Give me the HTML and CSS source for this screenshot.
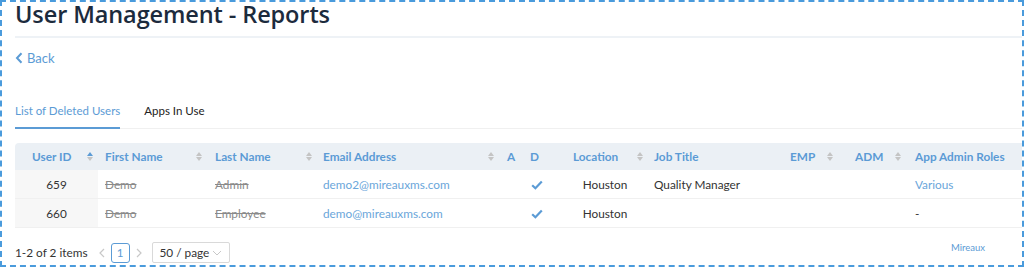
FILE: index.html
```html
<!DOCTYPE html>
<html>
<head>
<meta charset="utf-8">
<link rel="stylesheet" href="styles.css">
</head>
<body>
<div class="frame">
  <h1 class="title">User Management - Reports</h1>
  <div class="divider"></div>
  <a class="back"><svg width="8" height="12" viewBox="0 0 8 12"><path d="M6.5 1.2 L2 6 L6.5 10.8" fill="none" stroke="#5b9bd5" stroke-width="2"/></svg><span>Back</span></a>
  <div class="tabs">
    <div class="tab active">List of Deleted Users</div>
    <div class="tab">Apps In Use</div>
  </div>
  <div class="table-wrap">
    <table class="grid">
      <colgroup>
        <col style="width:83px"><col style="width:107px"><col style="width:110px"><col style="width:185px"><col style="width:20px"><col style="width:45px"><col style="width:80px"><col style="width:135px"><col style="width:60px"><col style="width:65px"><col style="width:117px">
      </colgroup>
      <thead>
        <tr>
          <th class="c-id"><div class="th"><span class="lbl">User ID</span><span class="sort asc"><i class="up"></i><i class="dn"></i></span></div></th>
          <th class="c-fn"><div class="th"><span class="lbl">First Name</span><span class="sort"><i class="up"></i><i class="dn"></i></span></div></th>
          <th class="c-ln"><div class="th"><span class="lbl">Last Name</span><span class="sort"><i class="up"></i><i class="dn"></i></span></div></th>
          <th class="c-em"><div class="th"><span class="lbl">Email Address</span><span class="sort"><i class="up"></i><i class="dn"></i></span></div></th>
          <th class="c-a"><div class="th"><span class="lbl">A</span></div></th>
          <th class="c-d"><div class="th"><span class="lbl">D</span></div></th>
          <th class="c-loc"><div class="th"><span class="lbl">Location</span><span class="sort"><i class="up"></i><i class="dn"></i></span></div></th>
          <th class="c-job"><div class="th"><span class="lbl">Job Title</span></div></th>
          <th class="c-emp"><div class="th"><span class="lbl">EMP</span><span class="sort"><i class="up"></i><i class="dn"></i></span></div></th>
          <th class="c-adm"><div class="th"><span class="lbl">ADM</span><span class="sort"><i class="up"></i><i class="dn"></i></span></div></th>
          <th class="c-roles"><div class="th"><span class="lbl">App Admin Roles</span></div></th>
        </tr>
      </thead>
      <tbody>
        <tr>
          <td class="c-id id">659</td>
          <td class="c-fn strike">Demo</td>
          <td class="c-ln strike">Admin</td>
          <td class="c-em link">demo2@mireauxms.com</td>
          <td class="c-a"></td>
          <td class="c-d"><svg class="check" width="12" height="10" viewBox="0 0 12 10"><path d="M1.2 5.2 L4.4 8.2 L10.8 1.6" fill="none" stroke="#5b9bd5" stroke-width="2.2"/></svg></td>
          <td class="c-loc loc">Houston</td>
          <td class="c-job">Quality Manager</td>
          <td class="c-emp"></td>
          <td class="c-adm"></td>
          <td class="c-roles link">Various</td>
        </tr>
        <tr>
          <td class="c-id id">660</td>
          <td class="c-fn strike">Demo</td>
          <td class="c-ln strike">Employee</td>
          <td class="c-em link">demo@mireauxms.com</td>
          <td class="c-a"></td>
          <td class="c-d"><svg class="check" width="12" height="10" viewBox="0 0 12 10"><path d="M1.2 5.2 L4.4 8.2 L10.8 1.6" fill="none" stroke="#5b9bd5" stroke-width="2.2"/></svg></td>
          <td class="c-loc loc">Houston</td>
          <td class="c-job"></td>
          <td class="c-emp"></td>
          <td class="c-adm"></td>
          <td class="c-roles dash">-</td>
        </tr>
      </tbody>
    </table>
  </div>
  <div class="footer">
    <div class="pager">
      <span class="total">1-2 of 2 items</span>
      <span class="nav prev"><svg width="6" height="10" viewBox="0 0 6 10"><path d="M5 1 L1 5 L5 9" fill="none" stroke="#c8c8c8" stroke-width="1.2"/></svg></span>
      <span class="page">1</span>
      <span class="nav next"><svg width="6" height="10" viewBox="0 0 6 10"><path d="M1 1 L5 5 L1 9" fill="none" stroke="#c8c8c8" stroke-width="1.2"/></svg></span>
      <span class="size"><span>50 / page</span><svg width="10" height="6" viewBox="0 0 10 6"><path d="M1 1 L5 5 L9 1" fill="none" stroke="#c8c8c8" stroke-width="1"/></svg></span>
    </div>
    <span class="brand">Mireaux</span>
  </div>
</div>
</body>
</html>
```
FILE: styles.css
```css
html, body {
  margin: 0;
  padding: 0;
  background: #ffffff;
}
body {
  font-family: Lato, "Open Sans", sans-serif;
  color: #333333;
}
.frame {
  box-sizing: border-box;
  width: 1024px;
  height: 267px;
  border: 2px dashed #4a9bdc;
  padding: 0 0 0 13px;
}
.title {
  margin: 0;
  font-family: "Open Sans", sans-serif;
  font-size: 23.5px;
  font-weight: 600;
  color: #1c2b3d;
  line-height: 24px;
  letter-spacing: -0.1px;
}
.divider {
  height: 2px;
  background: #eef2f6;
  margin-top: 10px;
}
.back {
  display: flex;
  align-items: center;
  gap: 4px;
  margin-top: 11px;
  height: 18px;
  color: #5b9bd5;
  font-size: 13px;
}
.tabs {
  display: flex;
  margin-top: 32px;
  border-bottom: 1px solid #f0f0f0;
}
.tab {
  font-size: 11.5px;
  line-height: 16px;
  padding: 4px 0 8px 0;
  margin-right: 24px;
  color: #222;
}
.tab.active {
  color: #5b9bd5;
  border-bottom: 2px solid #5b9bd5;
  margin-bottom: -1px;
}
.table-wrap {
  margin-top: 14px;
}
.grid {
  border-collapse: collapse;
  table-layout: fixed;
  width: 1007px;
  font-size: 11.8px;
}
.grid thead th {
  background: #ebf0f5;
  height: 27px;
  padding: 0;
  text-align: left;
  font-weight: 700;
  font-size: 11.8px;
  color: #5b9bd5;
}
.grid thead th:first-child {
  border-top-left-radius: 4px;
}
.th {
  display: flex;
  align-items: center;
  padding-left: 8px;
  padding-right: 4px;
}
.th .lbl {
  white-space: nowrap;
}
.sort {
  margin-left: auto;
  display: flex;
  flex-direction: column;
  gap: 1px;
}
.sort i {
  display: block;
  width: 0;
  height: 0;
  border-left: 3.5px solid transparent;
  border-right: 3.5px solid transparent;
}
.sort i.up { border-bottom: 4px solid #c4c4c4; }
.sort i.dn { border-top: 4px solid #c4c4c4; }
.sort.asc i.up { border-bottom-color: #5b9bd5; }
.c-id .th { padding-left: 17px; padding-right: 5px; }
.c-fn .th { padding-left: 7px; padding-right: 3px; }
.c-ln .th { padding-left: 10px; padding-right: 3px; }
.c-em .th { padding-left: 8px; padding-right: 6px; }
.c-a .th { padding-left: 7px; }
.c-d .th { padding-left: 10px; }
.c-loc .th { padding-left: 8px; padding-right: 2px; }
.c-job .th { padding-left: 9px; }
.c-emp .th { padding-left: 10px; padding-right: 7px; }
.c-adm .th { padding-left: 15px; padding-right: 4px; }
.c-roles .th { padding-left: 10px; }
.grid tbody td {
  height: 27px;
  padding: 1px 0 0 8px;
  border-bottom: 1px solid #f0f0f0;
  white-space: nowrap;
  color: #333;
}
.grid tbody td.id {
  background: #f7f7f7;
  text-align: center;
  padding: 1px 0 0 0;
}
.grid tbody td.c-fn { padding-left: 7px; }
.grid tbody td.c-ln { padding-left: 10px; }
.grid tbody td.c-job { padding-left: 9px; }
.grid tbody td.c-roles { padding-left: 10px; }
.strike {
  text-decoration: line-through;
  color: #8a8a8a !important;
}
.link {
  color: #6aa6da !important;
}
.grid tbody td.c-d {
  padding-left: 11px;
}
.check {
  display: block;
}
.grid tbody td.loc {
  text-align: center;
  padding: 1px 0 0 0;
}
.footer {
  display: flex;
  align-items: flex-start;
  justify-content: space-between;
  margin-top: 14px;
  padding-right: 37px;
}
.pager {
  display: flex;
  align-items: center;
  font-size: 11.8px;
  color: #333;
}
.total {
  margin-right: 11px;
  white-space: nowrap;
}
.nav {
  display: flex;
  align-items: center;
  width: 10px;
}
.nav.next { justify-content: flex-end; }
.page {
  box-sizing: border-box;
  width: 19px;
  height: 20px;
  border: 1px solid #5b9bd5;
  border-radius: 3px;
  color: #5b9bd5;
  display: flex;
  align-items: center;
  justify-content: center;
  margin: 0 2px;
  font-size: 11.5px;
}
.size {
  box-sizing: border-box;
  display: flex;
  align-items: center;
  justify-content: space-between;
  height: 21px;
  padding: 0 7px 0 7px;
  margin-left: 10px;
  width: 78px;
  border: 1px solid #d9d9d9;
  border-radius: 2px;
  font-size: 11.8px;
  white-space: nowrap;
}
.brand {
  font-size: 9.5px;
  color: #5b9bd5;
}
```
